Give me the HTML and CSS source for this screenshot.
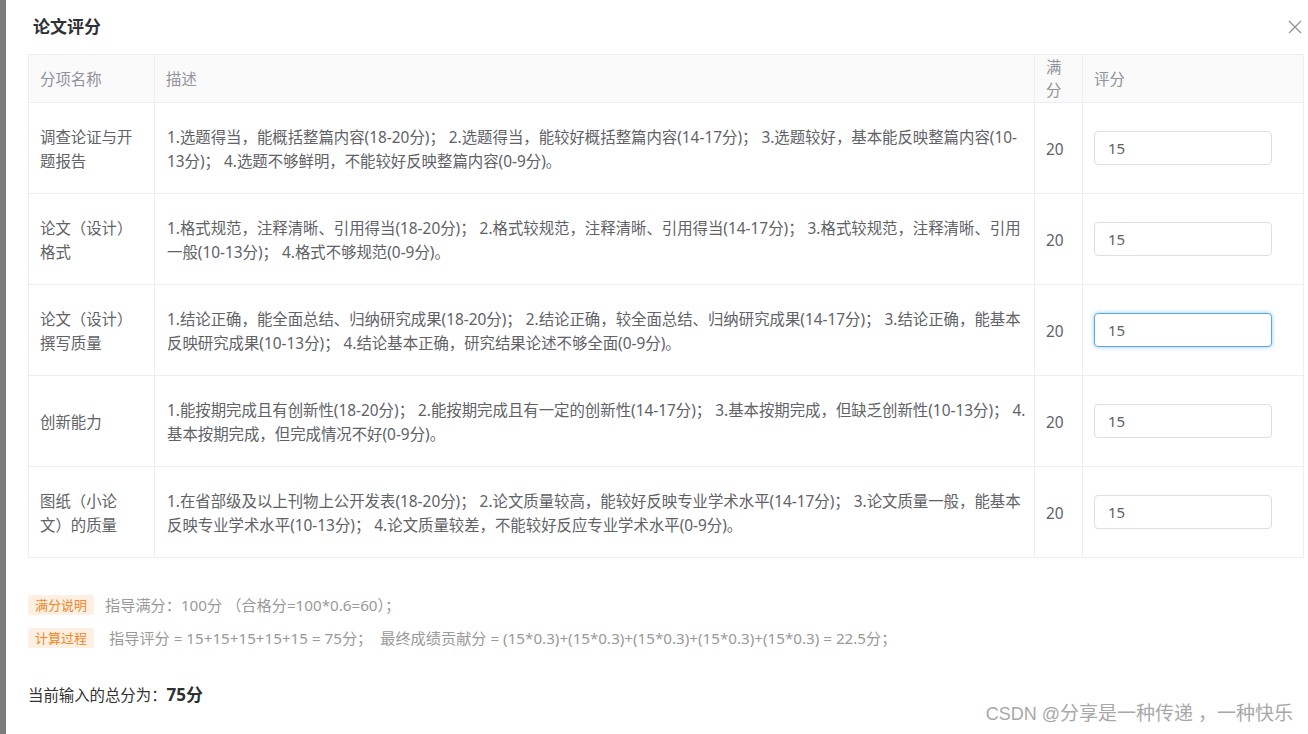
FILE: index.html
```html
<!DOCTYPE html>
<html lang="zh">
<head>
<meta charset="utf-8">
<title>论文评分</title>
<link rel="stylesheet" href="styles.css">
</head>
<body>
<div class="page">
  <div class="mask-strip"></div>
  <div class="dialog">
    <div class="dialog-header">
      <span class="dialog-title">论文评分</span>
      <button class="close" aria-label="关闭">
        <svg width="14" height="14" viewBox="0 0 14 14"><path d="M1 1L13 13M13 1L1 13" stroke="#909399" stroke-width="1.3" fill="none"/></svg>
      </button>
    </div>
    <table class="score-table">
      <colgroup>
        <col class="c-name"><col class="c-desc"><col class="c-full"><col class="c-score">
      </colgroup>
      <thead>
        <tr><th>分项名称</th><th>描述</th><th class="th-full">满分</th><th>评分</th></tr>
      </thead>
      <tbody>
        <tr>
          <td>调查论证与开题报告</td>
          <td>1.选题得当，能概括整篇内容(18-20分)； 2.选题得当，能较好概括整篇内容(14-17分)； 3.选题较好，基本能反映整篇内容(10-13分)； 4.选题不够鲜明，不能较好反映整篇内容(0-9分)。</td>
          <td>20</td>
          <td><input class="inp" type="text" value="15"></td>
        </tr>
        <tr>
          <td>论文（设计）格式</td>
          <td>1.格式规范，注释清晰、引用得当(18-20分)； 2.格式较规范，注释清晰、引用得当(14-17分)； 3.格式较规范，注释清晰、引用一般(10-13分)； 4.格式不够规范(0-9分)。</td>
          <td>20</td>
          <td><input class="inp" type="text" value="15"></td>
        </tr>
        <tr>
          <td>论文（设计）撰写质量</td>
          <td>1.结论正确，能全面总结、归纳研究成果(18-20分)； 2.结论正确，较全面总结、归纳研究成果(14-17分)； 3.结论正确，能基本反映研究成果(10-13分)； 4.结论基本正确，研究结果论述不够全面(0-9分)。</td>
          <td>20</td>
          <td><input class="inp focus" type="text" value="15"></td>
        </tr>
        <tr>
          <td>创新能力</td>
          <td>1.能按期完成且有创新性(18-20分)； 2.能按期完成且有一定的创新性(14-17分)； 3.基本按期完成，但缺乏创新性(10-13分)； 4.基本按期完成，但完成情况不好(0-9分)。</td>
          <td>20</td>
          <td><input class="inp" type="text" value="15"></td>
        </tr>
        <tr>
          <td>图纸（小论文）的质量</td>
          <td>1.在省部级及以上刊物上公开发表(18-20分)； 2.论文质量较高，能较好反映专业学术水平(14-17分)； 3.论文质量一般，能基本反映专业学术水平(10-13分)； 4.论文质量较差，不能较好反应专业学术水平(0-9分)。</td>
          <td>20</td>
          <td><input class="inp" type="text" value="15"></td>
        </tr>
      </tbody>
    </table>
    <div class="notes">
      <div class="note"><span class="tag">满分说明</span><span class="note-text">指导满分：100分 （合格分=100*0.6=60）；</span></div>
      <div class="note"><span class="tag">计算过程</span><span class="note-text second">指导评分 = 15+15+15+15+15 = 75分；&nbsp; 最终成绩贡献分 = (15*0.3)+(15*0.3)+(15*0.3)+(15*0.3)+(15*0.3) = 22.5分；</span></div>
    </div>
    <div class="total">当前输入的总分为：<b>75分</b></div>
    <div class="watermark"><span class="wm-latin">CSDN @</span>分享是一种传递 ，一种快乐</div>
  </div>
</div>
</body>
</html>
```

FILE: styles.css
```css
* { box-sizing: border-box; }
html, body { margin: 0; padding: 0; }
body {
  font-family: "Noto Sans", "Noto Sans CJK SC", sans-serif;
  font-size: 15.4px;
  color: #606266;
  background: #fff;
  width: 1308px;
  height: 734px;
  overflow: hidden;
}
.page { display: flex; height: 734px; }
.mask-strip { width: 6px; flex: none; background: #7b7b7b; }
.dialog {
  position: relative;
  flex: 1;
  background: #fff;
  padding: 0 5px 0 22px;
}
.dialog-header {
  height: 54px;
  padding: 15px 0 0 5px;
}
.dialog-title {
  font-size: 17px;
  line-height: 24px;
  font-weight: 700;
  color: #303133;
}
.close {
  position: absolute;
  top: 19px;
  right: 6px;
  width: 16px;
  height: 16px;
  padding: 0;
  border: 0;
  background: none;
  display: flex;
  align-items: center;
  justify-content: center;
}
.score-table {
  width: 1275px;
  border-collapse: collapse;
  table-layout: fixed;
  border: 1px solid #ebeef5;
}
.c-name { width: 126px; }
.c-desc { width: 880px; }
.c-full { width: 48px; }
.c-score { width: 221px; }
.score-table th, .score-table td {
  border: 1px solid #ebeef5;
  padding: 0 14px 0 11px;
  text-align: left;
  vertical-align: middle;
  line-height: 24px;
}
.score-table th {
  height: 48px;
  background: #fafafa;
  color: #909399;
  font-weight: 400;
  line-height: 23px;
  padding-top: 1px;
}
.score-table th.th-full { padding: 0 11px; }
.score-table td {
  height: 91px;
  color: #606266;
  padding-top: 4px;
}
.score-table td:nth-child(2) { padding-left: 12px; padding-right: 5px; }
.score-table td:nth-child(3) { padding-right: 6px; }
.inp {
  display: block;
  width: 178px;
  height: 34px;
  margin-top: -4px;
  border: 1px solid #dcdfe6;
  border-radius: 4px;
  padding: 0 13px;
  font-family: "Noto Sans", "Noto Sans CJK SC", sans-serif;
  font-size: 15px;
  color: #606266;
  background: #fff;
  outline: none;
}
.inp.focus {
  border-color: #5aa7e6;
  box-shadow: 0 0 4px rgba(102, 175, 233, 0.7);
}
.notes { padding-top: 37px; }
.note {
  display: flex;
  align-items: center;
  height: 20px;
  margin-bottom: 13px;
}
.tag {
  display: inline-block;
  height: 20px;
  line-height: 20px;
  border-radius: 3px;
  background: #fdf0e2;
  color: #f0872a;
  font-size: 13px;
  width: 66px;
  text-align: center;
}
.note-text {
  margin-left: 11px;
  color: #999;
  font-size: 15.2px;
  line-height: 20px;
}
.note-text.second { margin-left: 15px; }
.total {
  margin-top: 35px;
  color: #333;
  font-size: 15.4px;
  line-height: 24px;
}
.total b { font-size: 17px; font-weight: 700; color: #303133; }
.watermark {
  position: absolute;
  right: 16px;
  bottom: 8px;
  font-size: 19px;
  line-height: 24px;
  color: #a8a8a8;
  text-shadow: 0 0 2px #fff;
}
.wm-latin { font-family: "Liberation Sans", sans-serif; font-size: 18px; }
```
